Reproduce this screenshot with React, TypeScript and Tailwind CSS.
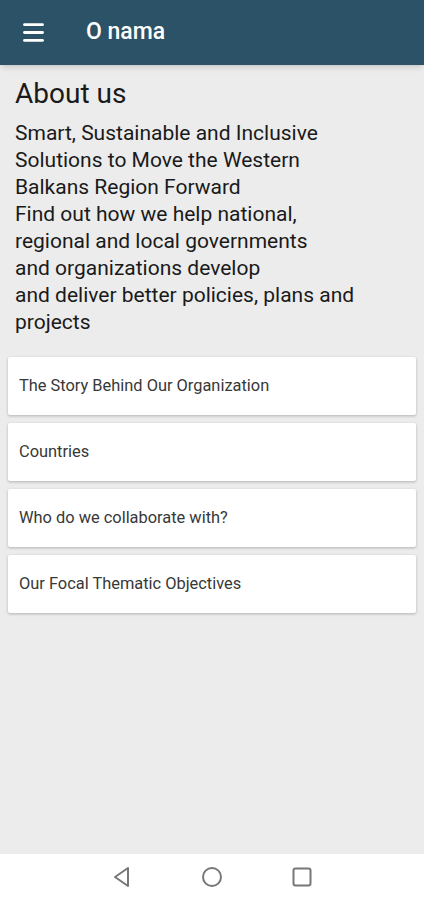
import { Menu } from "lucide-react";

const items = [
  "The Story Behind Our Organization",
  "Countries",
  "Who do we collaborate with?",
  "Our Focal Thematic Objectives",
];

export default function App() {
  return (
    <div className="w-[424px] h-[900px] flex flex-col bg-[#ececec] font-['Roboto',sans-serif] overflow-hidden">
      {/* App bar */}
      <div className="h-[65px] shrink-0 bg-[#2b5266] flex items-center pl-[20px] shadow-md">
        <Menu className="w-[27px] h-[27px] text-white" strokeWidth={2.5} />
        <span className="ml-[39px] text-white text-[23px] font-medium">O nama</span>
      </div>

      {/* Content */}
      <div className="flex-1 min-h-0 flex flex-col">
        <div className="px-[15px] pt-[13px]">
          <h1 className="text-[28px] leading-[32px] text-[#1a1a1a]">About us</h1>
          <p className="mt-[10px] text-[21px] leading-[27px] text-[#1a1a1a]">
            Smart, Sustainable and Inclusive
            <br />
            Solutions to Move the Western
            <br />
            Balkans Region Forward
            <br />
            Find out how we help national,
            <br />
            regional and local governments
            <br />
            and organizations develop
            <br />
            and deliver better policies, plans and
            <br />
            projects
          </p>
        </div>

        <div className="mt-[21px] px-[8px] flex flex-col gap-[8px]">
          {items.map((item) => (
            <div
              key={item}
              className="h-[58px] bg-white rounded-[2px] shadow-[0_1px_3px_rgba(0,0,0,0.25)] flex items-center px-[11px]"
            >
              <span className="text-[16.4px] text-[#383838]">{item}</span>
            </div>
          ))}
        </div>
      </div>

      {/* System nav bar */}
      <div className="h-[46px] shrink-0 bg-white flex items-center justify-center gap-[60px]">
        <svg width="30" height="30" viewBox="0 0 30 30" fill="none" stroke="#777" strokeWidth="2" strokeLinejoin="round">
          <path d="M21 6 L8 15 L21 24 Z" />
        </svg>
        <svg width="30" height="30" viewBox="0 0 30 30" fill="none" stroke="#777" strokeWidth="2">
          <circle cx="15" cy="15" r="9" />
        </svg>
        <svg width="30" height="30" viewBox="0 0 30 30" fill="none" stroke="#777" strokeWidth="2">
          <rect x="6.5" y="6.5" width="17" height="17" rx="2" />
        </svg>
      </div>
    </div>
  );
}
